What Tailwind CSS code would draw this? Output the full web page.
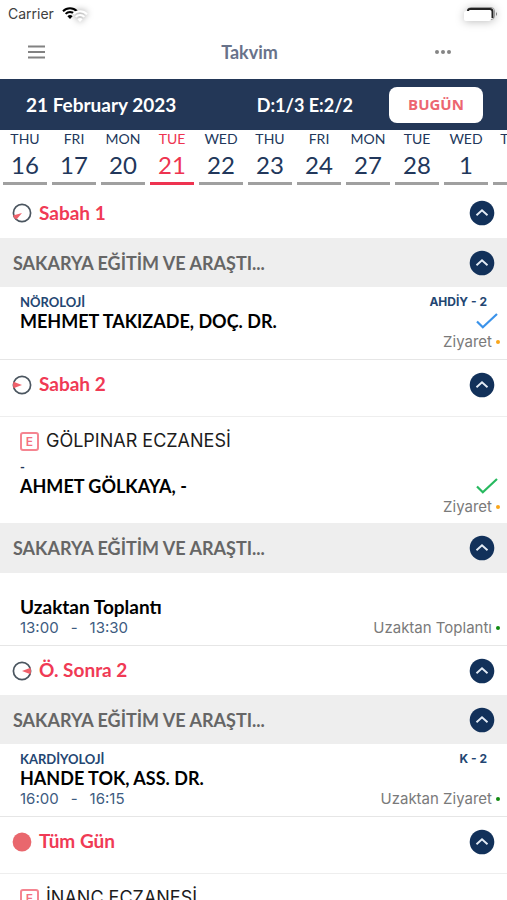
<!DOCTYPE html>
<html lang="tr">
<head>
    <meta charset="UTF-8">
    <meta name="viewport" content="width=device-width, initial-scale=1.0">
    <title>Takvim</title>
    <script src="https://cdn.jsdelivr.net/npm/@tailwindcss/browser@4"></script>
</head>
<body class="bg-white h-screen overflow-hidden flex flex-col font-['Lato','Open_Sans',sans-serif] text-[#22375b]">
    <!-- shared icons -->
    <svg class="hidden">
        <symbol id="up" viewBox="0 0 26 26">
            <circle cx="13" cy="13" r="12.3" fill="#12315a"/>
            <path d="M7.500 15.300l5.500-5 5.500 5" fill="none" stroke="#e3ebf5" stroke-width="1.900"/>
        </symbol>
        <symbol id="check" viewBox="0 0 22 16">
            <path d="M1 8.5l5.8 5.7L21 1" fill="none" stroke="currentColor" stroke-width="2.2"/>
        </symbol>
        <symbol id="wifi" viewBox="0 0 16 12">
            <path d="M1 4.2a10 10 0 0 1 14 0M3.6 6.9a6.3 6.3 0 0 1 8.8 0" fill="none" stroke="currentColor" stroke-width="2"/>
            <path d="M8 12L5.4 9.3a3.7 3.7 0 0 1 5.2 0z" fill="currentColor"/>
        </symbol>
    </svg>

    <div class="flex items-center justify-between h-7 px-2 shrink-0 font-['Inter',sans-serif]">
        <div class="flex items-center gap-2">
            <span class="text-sm leading-5 text-neutral-700">Carrier</span>
            <div class="relative w-7 h-5">
                <svg class="absolute left-0 top-[3px] w-4 h-3 text-black"><use href="#wifi"/></svg>
                <svg class="absolute left-[10px] top-[6px] w-4 h-3 text-white drop-shadow-[0_0_3px_rgba(0,0,0,0.5)]"><use href="#wifi"/></svg>
            </div>
        </div>
        <svg class="w-9 h-5 drop-shadow-[0_1px_4px_rgba(0,0,0,0.25)]" viewBox="0 0 36 20">
            <rect x="4.500" y="3.500" width="27" height="12" rx="3.500" fill="#fff" stroke="#999"/>
            <path d="M5 9V7q0-2 2-2h20q2.500 0 2.500 2.500V14" fill="none" stroke="#222" stroke-width="2"/>
            <rect x="1" y="7" width="27" height="10" rx="2" fill="#fff"/>
            <path d="M33 8v4q2-2 0-4" fill="#777"/>
        </svg>
    </div>

    <header class="grid grid-cols-3 items-center h-[51px] pr-2 pb-1 shrink-0">
        <button aria-label="Menü" class="ml-[27px] justify-self-start">
            <svg class="w-[19px] h-4" viewBox="0 0 19 16"><path d="M1 2.500h17M1 8h17M1 13.500h17" stroke="#828282" stroke-width="2"/></svg>
        </button>
        <h1 class="text-lg leading-5 font-bold text-center text-[#68728a]">Takvim</h1>
        <button aria-label="Diğer" class="mr-[47px] justify-self-end">
            <svg class="w-[18px] h-4" viewBox="0 0 18 16" fill="#858585"><circle cx="3" cy="8" r="2"/><circle cx="9" cy="8" r="2"/><circle cx="15" cy="8" r="2"/></svg>
        </button>
    </header>

    <div class="flex items-center h-[51px] shrink-0 pl-[26px] pr-6 bg-[#233757] text-white font-bold text-lg">
        <span class="flex-1 text-[19px]">21 February 2023</span>
        <span class="mr-9">D:1/3 E:2/2</span>
        <button class="w-[94px] h-9 rounded-lg bg-white text-[#ec6670] text-[15px] font-['Open_Sans',sans-serif]">BUGÜN</button>
    </div>

    <nav class="flex gap-[5px] pl-[3px] h-[58px] shrink-0 overflow-hidden text-sm text-center">
        <button class="w-11 h-[55px] shrink-0 border-b-3 border-[#a0a0a0]"><span class="block leading-[18px]">THU</span><span class="block text-2xl leading-[34px]">16</span></button>
        <button class="w-11 h-[55px] shrink-0 border-b-3 border-[#a0a0a0]"><span class="block leading-[18px]">FRI</span><span class="block text-2xl leading-[34px]">17</span></button>
        <button class="w-11 h-[55px] shrink-0 border-b-3 border-[#a0a0a0]"><span class="block leading-[18px]">MON</span><span class="block text-2xl leading-[34px]">20</span></button>
        <button class="w-11 h-[55px] shrink-0 border-b-3 border-[#ee3350] text-[#ee3350]"><span class="block leading-[18px]">TUE</span><span class="block text-2xl leading-[34px]">21</span></button>
        <button class="w-11 h-[55px] shrink-0 border-b-3 border-[#a0a0a0]"><span class="block leading-[18px]">WED</span><span class="block text-2xl leading-[34px]">22</span></button>
        <button class="w-11 h-[55px] shrink-0 border-b-3 border-[#a0a0a0]"><span class="block leading-[18px]">THU</span><span class="block text-2xl leading-[34px]">23</span></button>
        <button class="w-11 h-[55px] shrink-0 border-b-3 border-[#a0a0a0]"><span class="block leading-[18px]">FRI</span><span class="block text-2xl leading-[34px]">24</span></button>
        <button class="w-11 h-[55px] shrink-0 border-b-3 border-[#a0a0a0]"><span class="block leading-[18px]">MON</span><span class="block text-2xl leading-[34px]">27</span></button>
        <button class="w-11 h-[55px] shrink-0 border-b-3 border-[#a0a0a0]"><span class="block leading-[18px]">TUE</span><span class="block text-2xl leading-[34px]">28</span></button>
        <button class="w-11 h-[55px] shrink-0 border-b-3 border-[#a0a0a0]"><span class="block leading-[18px]">WED</span><span class="block text-2xl leading-[34px]">1</span></button>
        <button class="w-11 h-[55px] shrink-0 border-b-3 border-[#a0a0a0]"><span class="block leading-[18px]">THU</span><span class="block text-2xl leading-[34px]">2</span></button>
    </nav>

    <main class="flex-1 min-h-0 overflow-hidden">
        <!-- Sabah 1 -->
        <div class="flex items-center gap-[7px] h-[50px] px-3">
            <svg class="w-5 h-5" viewBox="0 0 20 20"><circle cx="10" cy="10" r="8.600" fill="none" stroke="#4b5660" stroke-width="1.700"/><path d="M10 10L1 12.500Q2 15.500 4.500 16.500z" fill="#f0616b"/></svg>
            <h2 class="flex-1 text-[19px] font-bold text-[#f03a55]">Sabah 1</h2>
            <button aria-label="Kapat"><svg class="w-[26px] h-[26px]"><use href="#up"/></svg></button>
        </div>
        <div class="flex items-center justify-between h-[49px] pl-[13px] pr-3 bg-[#eeeeee]">
            <h3 class="text-lg font-bold text-[#666666]">SAKARYA EĞİTİM VE ARAŞTI...</h3>
            <button aria-label="Kapat"><svg class="w-[26px] h-[26px]"><use href="#up"/></svg></button>
        </div>
        <div class="pl-5 pr-[7px] py-2 border-b border-[#e6e6e6]">
            <div class="flex justify-between pr-[13px] h-[14px] text-xs leading-[14px] font-bold text-[#234672]"><span class="text-[13px] leading-[14px]">NÖROLOJİ</span><span class="font-['Inter',sans-serif]">AHDİY - 2</span></div>
            <div class="flex items-center justify-between pr-[2px] h-6"><span class="text-lg leading-6 font-bold text-black">MEHMET TAKIZADE, DOÇ. DR.</span><svg class="w-[22px] h-4 text-[#3b93ea]"><use href="#check"/></svg></div>
            <div class="flex items-center justify-end gap-1 h-[18px] text-[15px] leading-[18px] font-['Inter',sans-serif] text-[#7a7a7a]">Ziyaret<i class="w-1 h-1 rounded-full bg-[#f9a61a]"></i></div>
        </div>

        <!-- Sabah 2 -->
        <div class="pb-[7px] border-b border-[#eeeeee]">
            <div class="flex items-center gap-[7px] h-[49px] px-3">
                <svg class="w-5 h-5" viewBox="0 0 20 20"><circle cx="10" cy="10" r="8.600" fill="none" stroke="#4b5660" stroke-width="1.700"/><path d="M10 10L1.500 6.800Q.5 10 1.500 13.200z" fill="#f0616b"/></svg>
                <h2 class="flex-1 text-[19px] font-bold text-[#f03a55]">Sabah 2</h2>
                <button aria-label="Kapat"><svg class="w-[26px] h-[26px]"><use href="#up"/></svg></button>
            </div>
        </div>
        <div class="pl-5 pr-[7px] pt-3 pb-[7px]">
            <div class="flex items-center gap-[7px] h-6 mb-[7px] font-['Inter',sans-serif]">
                <span class="w-[19px] h-[19px] border-2 border-[#f58591] rounded-[3px] text-center text-xs leading-[15px] font-semibold text-[#f4707f]">E</span>
                <span class="text-lg leading-6 text-[#1c1c1c]">GÖLPINAR ECZANESİ</span>
            </div>
            <div class="h-[14px] text-[13px] leading-[14px] font-bold">-</div>
            <div class="flex items-center justify-between pr-[2px] h-6"><span class="text-lg leading-6 font-bold text-black">AHMET GÖLKAYA, -</span><svg class="w-[22px] h-4 text-[#27b95f]"><use href="#check"/></svg></div>
            <div class="flex items-center justify-end gap-1 h-[18px] text-[15px] leading-[18px] font-['Inter',sans-serif] text-[#7a7a7a]">Ziyaret<i class="w-1 h-1 rounded-full bg-[#f9a61a]"></i></div>
        </div>
        <div class="flex items-center justify-between h-[50px] pl-[13px] pr-3 bg-[#eeeeee]">
            <h3 class="text-lg font-bold text-[#666666]">SAKARYA EĞİTİM VE ARAŞTI...</h3>
            <button aria-label="Kapat"><svg class="w-[26px] h-[26px]"><use href="#up"/></svg></button>
        </div>
        <div class="pl-5 pr-[7px] py-2 border-b border-[#e6e6e6]">
            <div class="h-[14px]"></div>
            <div class="text-[19px] leading-6 font-bold text-black">Uzaktan Toplantı</div>
            <div class="flex items-center h-[18px] text-[15px] leading-[18px] font-['Inter',sans-serif] text-[#7a7a7a]">
                <span class="flex-1 flex gap-3 text-[#3d5b80]"><span>13:00</span><span>-</span><span>13:30</span></span>
                <span class="mr-1">Uzaktan Toplantı</span><i class="w-1 h-1 rounded-full bg-[#118a11]"></i>
            </div>
        </div>

        <!-- Öğleden sonra 2 -->
        <div class="flex items-center gap-[7px] h-[49px] px-3">
            <svg class="w-5 h-5" viewBox="0 0 20 20"><circle cx="10" cy="10" r="8.600" fill="none" stroke="#4b5660" stroke-width="1.700"/><path d="M10 10L18.500 6.800Q19.500 10 18.500 13.200z" fill="#f0616b"/></svg>
            <h2 class="flex-1 text-[19px] font-bold text-[#f03a55]">Ö. Sonra 2</h2>
            <button aria-label="Kapat"><svg class="w-[26px] h-[26px]"><use href="#up"/></svg></button>
        </div>
        <div class="flex items-center justify-between h-[49px] pl-[13px] pr-3 bg-[#eeeeee]">
            <h3 class="text-lg font-bold text-[#666666]">SAKARYA EĞİTİM VE ARAŞTI...</h3>
            <button aria-label="Kapat"><svg class="w-[26px] h-[26px]"><use href="#up"/></svg></button>
        </div>
        <div class="pl-5 pr-[7px] py-2 border-b border-[#e6e6e6]">
            <div class="flex justify-between pr-[13px] h-[14px] text-xs leading-[14px] font-bold text-[#234672]"><span class="text-[13px] leading-[14px]">KARDİYOLOJİ</span><span class="font-['Inter',sans-serif]">K - 2</span></div>
            <div class="text-lg leading-6 font-bold text-black">HANDE TOK, ASS. DR.</div>
            <div class="flex items-center h-[18px] text-[15px] leading-[18px] font-['Inter',sans-serif] text-[#7a7a7a]">
                <span class="flex-1 flex gap-3 text-[#3d5b80]"><span>16:00</span><span>-</span><span>16:15</span></span>
                <span class="mr-1">Uzaktan Ziyaret</span><i class="w-1 h-1 rounded-full bg-[#118a11]"></i>
            </div>
        </div>

        <!-- Tüm gün -->
        <div class="pb-[7px] border-b border-[#eeeeee]">
            <div class="flex items-center gap-[7px] h-[49px] px-3">
                <svg class="w-5 h-5" viewBox="0 0 20 20"><circle cx="10" cy="10" r="9.400" fill="#e9676d"/></svg>
                <h2 class="flex-1 text-[19px] font-bold text-[#f03a55]">Tüm Gün</h2>
                <button aria-label="Kapat"><svg class="w-[26px] h-[26px]"><use href="#up"/></svg></button>
            </div>
        </div>
        <div class="pl-5 pr-[7px] pt-3 pb-[7px]">
            <div class="flex items-center gap-[7px] h-6 font-['Inter',sans-serif]">
                <span class="w-[19px] h-[19px] border-2 border-[#f58591] rounded-[3px] text-center text-xs leading-[15px] font-semibold text-[#f4707f]">E</span>
                <span class="text-lg leading-6 text-[#1c1c1c]">İNANÇ ECZANESİ</span>
            </div>
        </div>
    </main>
</body>
</html>
